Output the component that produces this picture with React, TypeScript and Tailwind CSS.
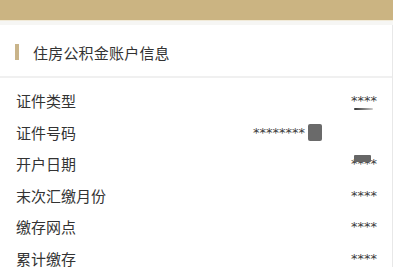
import React from 'react';

interface Row {
  label: string;
  value: string;
  mark?: 'line' | 'box' | 'cover';
}

const rows: Row[] = [
  { label: '证件类型', value: '****', mark: 'line' },
  { label: '证件号码', value: '********', mark: 'box' },
  { label: '开户日期', value: '****', mark: 'cover' },
  { label: '末次汇缴月份', value: '****' },
  { label: '缴存网点', value: '****' },
  { label: '累计缴存', value: '****' },
];

const App: React.FC = () => {
  return (
    <div
      className="w-[393px] h-[267px] overflow-hidden bg-white text-[#333]"
      style={{ fontFamily: '"Noto Sans CJK SC", "Noto Sans", sans-serif' }}
    >
      {/* Top gold band */}
      <div className="h-[20px] bg-[#cbb482]" />
      <div className="h-[5px] bg-[#f6f6f4] border-t border-[#f1ead8]" />

      <div className="border-r border-[#e8e8e8]">
        {/* Section title */}
        <div className="h-[53px] flex items-center pt-[3px] pl-[15px] border-b-2 border-[#f0f0f0]">
          <span className="w-[4px] h-[16px] bg-[#c9b48a] mr-[14px]" />
          <span className="text-[15px] leading-none tracking-[0.2px]">住房公积金账户信息</span>
        </div>

        {/* Account rows */}
        <div className="pt-[7px]">
          {rows.map((row) => (
            <div key={row.label} className="h-[31.5px] flex items-center justify-between pl-[16px] pr-[15px]">
              <span className="text-[15px] leading-none">{row.label}</span>
              <span className={row.mark === 'box' ? 'flex items-center mr-[55px]' : 'flex items-center'}>
                <span
                  className="relative text-[13px] leading-none text-[#3a3a3a]"
                  style={{ fontFamily: '"DejaVu Sans", sans-serif' }}
                >
                  {row.value}
                  {row.mark === 'line' && (
                    <span className="absolute left-[3px] top-[14px] w-[19px] h-[2px] rounded-full bg-gradient-to-r from-[#333] to-[#ccc]" />
                  )}
                  {row.mark === 'cover' && (
                    <span className="absolute left-[3px] -top-[2px] w-[17px] h-[7px] rounded-[1px] bg-[#666]" />
                  )}
                </span>
                {row.mark === 'box' && (
                  <span className="ml-[3px] w-[14px] h-[17px] rounded-[2px] bg-[#6a6a6a]" />
                )}
              </span>
            </div>
          ))}
        </div>
      </div>
    </div>
  );
};

export default App;
